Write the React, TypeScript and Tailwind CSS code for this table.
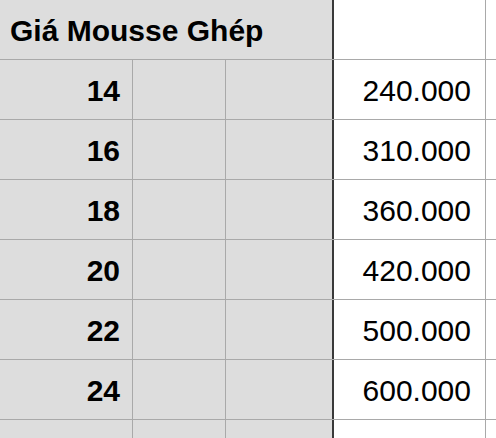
import React from "react";

const rows = [
  ["14", "240.000"],
  ["16", "310.000"],
  ["18", "360.000"],
  ["20", "420.000"],
  ["22", "500.000"],
  ["24", "600.000"],
];

export default function App() {
  return (
    <div
      className="w-[496px] h-[438px] overflow-hidden bg-white text-black"
      style={{ fontFamily: '"Liberation Sans", Arial, sans-serif' }}
    >
      <div className="flex h-[60px] border-b border-[#a9a9a9]">
        <div className="w-[334px] shrink-0 bg-[#dddddd] border-r-2 border-[#3a3a3a] flex items-center pl-[10px] pt-[2px] text-[30px] font-bold">
          Giá Mousse Ghép
        </div>
        <div className="w-[152px] shrink-0 border-r border-[#a9a9a9]" />
        <div className="flex-1" />
      </div>
      {rows.map(([a, b]) => (
        <div key={a} className="flex h-[60px] border-b border-[#a9a9a9]">
          <div className="w-[133px] shrink-0 bg-[#dddddd] border-r border-[#a9a9a9] flex items-center justify-end pr-[12px] pt-[1px] text-[30px] font-bold">
            {a}
          </div>
          <div className="w-[93px] shrink-0 bg-[#dddddd] border-r border-[#a9a9a9]" />
          <div className="w-[108px] shrink-0 bg-[#dddddd] border-r-2 border-[#3a3a3a]" />
          <div className="w-[152px] shrink-0 border-r border-[#a9a9a9] flex items-center justify-end pr-[14px] pt-[1px] text-[30px]">
            {b}
          </div>
          <div className="flex-1" />
        </div>
      ))}
      <div className="flex h-[60px]">
        <div className="w-[133px] shrink-0 bg-[#dddddd] border-r border-[#a9a9a9]" />
        <div className="w-[93px] shrink-0 bg-[#dddddd] border-r border-[#a9a9a9]" />
        <div className="w-[108px] shrink-0 bg-[#dddddd] border-r-2 border-[#3a3a3a]" />
        <div className="w-[152px] shrink-0 border-r border-[#a9a9a9]" />
        <div className="flex-1" />
      </div>
    </div>
  );
}
